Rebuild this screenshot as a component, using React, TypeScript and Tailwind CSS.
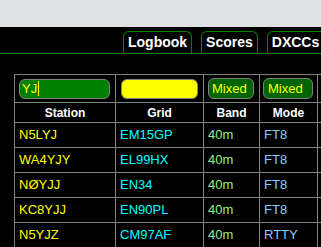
const rows = [
  { call: "N5LYJ", grid: "EM15GP", band: "40m", mode: "FT8" },
  { call: "WA4YJY", grid: "EL99HX", band: "40m", mode: "FT8" },
  { call: "NØYJJ", grid: "EN34", band: "40m", mode: "FT8" },
  { call: "KC8YJJ", grid: "EN90PL", band: "40m", mode: "FT8" },
  { call: "N5YJZ", grid: "CM97AF", band: "40m", mode: "RTTY" },
];

function Tab({ label, wide }: { label: string; wide?: boolean }) {
  return (
    <div
      className={
        wide
          ? "h-[22px] w-[64px] shrink-0 rounded-t-[6px] border border-b-0 border-[#008000] px-[4px] text-[14px] font-bold leading-[21px] text-white"
          : "h-[22px] shrink-0 rounded-t-[6px] border border-b-0 border-[#008000] px-[4px] text-[14px] font-bold leading-[21px] text-white"
      }
    >
      {label}
    </div>
  );
}

export default function App() {
  return (
    <div className="h-[247px] w-[321px] overflow-hidden bg-black font-['Liberation_Sans',Arial,sans-serif]">
      <div className="h-[27px] bg-[#dfe1e5]" />
      <div className="flex h-[27px] items-end gap-[9px] overflow-hidden border-b border-[#008000] pl-[123px]">
        <Tab label="Logbook" />
        <Tab label="Scores" />
        <Tab label="DXCCs" wide />
      </div>
      <div className="ml-[14px] mt-[20px] w-[363px]">
        <table className="w-[363px] table-fixed border-collapse text-[13px]">
          <colgroup>
            <col className="w-[101px]" />
            <col className="w-[88px]" />
            <col className="w-[56px]" />
            <col className="w-[58px]" />
            <col className="w-[60px]" />
          </colgroup>
          <tbody>
            <tr className="h-[28px]">
              <td className="border border-[#808080] pl-[4px] pr-[5px]">
                <div className="flex h-[20px] items-center rounded-[6px] border border-[#808080] bg-[#008000] pl-[2px] leading-none text-[#ffff00]">
                  YJ<span className="ml-[1px] inline-block h-[15px] w-px bg-[#ffff00]" />
                </div>
              </td>
              <td className="border border-[#808080] px-[5px]">
                <div className="h-[20px] rounded-[6px] border border-[#808080] bg-[#ffff00]" />
              </td>
              <td className="border border-[#808080] pl-[4px] pr-[5px]">
                <div className="flex h-[21px] items-center rounded-[6px] border border-[#808080] bg-[#006400] pl-[3px] leading-none text-[#ffff00]">
                  Mixed
                </div>
              </td>
              <td className="border border-[#808080] pl-[3px] pr-[4px]">
                <div className="flex h-[21px] items-center rounded-[6px] border border-[#808080] bg-[#006400] pl-[4px] leading-none text-[#ffff00]">
                  Mixed
                </div>
              </td>
              <td className="border border-[#808080]" />
            </tr>
            <tr className="h-[20px] text-[12px] font-bold text-white">
              <td className="border border-[#808080] text-center">Station</td>
              <td className="border border-[#808080] text-center">Grid</td>
              <td className="border border-[#808080] text-center">Band</td>
              <td className="border border-[#808080] text-center">Mode</td>
              <td className="border border-[#808080] text-center" />
            </tr>
            {rows.map((r) => (
              <tr key={r.call} className="h-[25px]">
                <td className="border border-[#808080] pl-[4px] text-[#ffff00]">{r.call}</td>
                <td className="border border-[#808080] pl-[4px] text-[#00ffff]">{r.grid}</td>
                <td className="border border-[#808080] pl-[4px] text-[#90ee90]">{r.band}</td>
                <td className="border border-[#808080] pl-[4px] text-[#87cefa]">{r.mode}</td>
                <td className="border border-[#808080]" />
              </tr>
            ))}
          </tbody>
        </table>
      </div>
    </div>
  );
}
